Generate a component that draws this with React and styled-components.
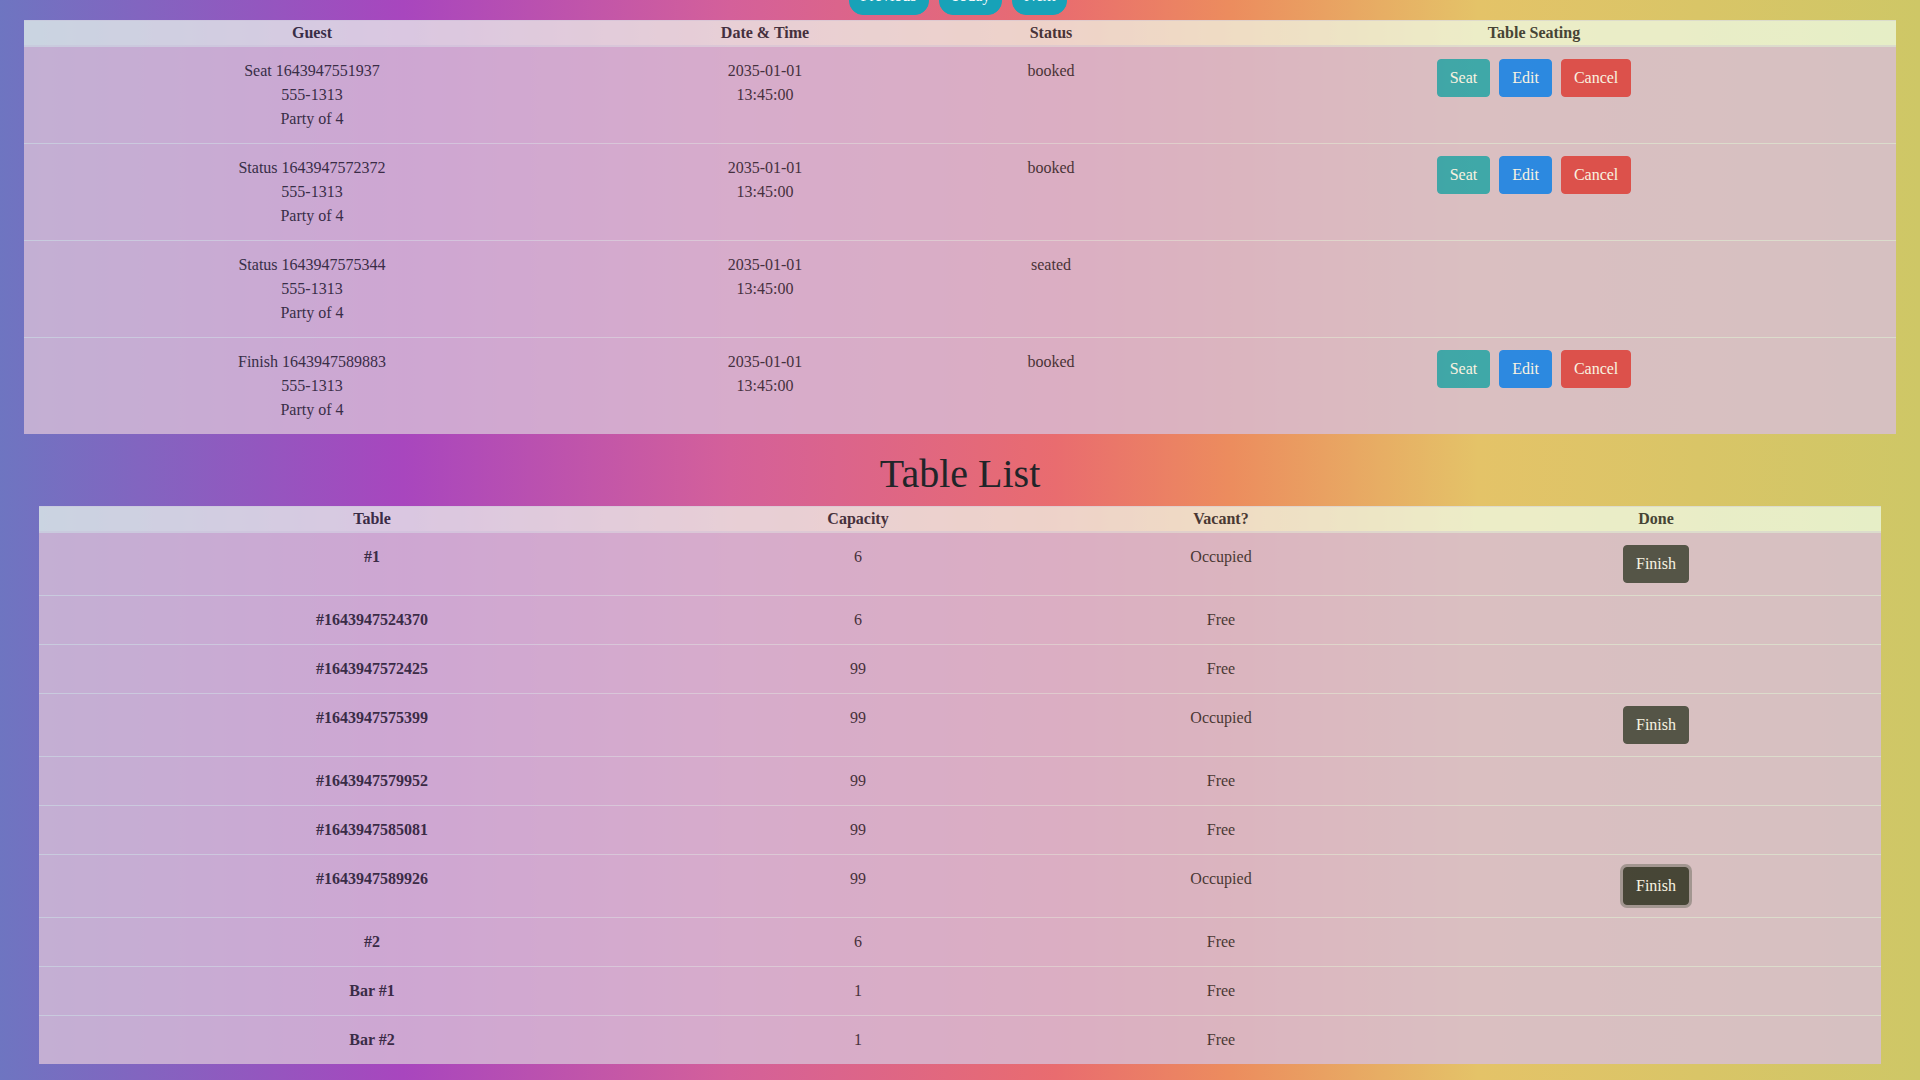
import styled, { createGlobalStyle } from "styled-components";

const reservations = [
  { id: 1, name: "Seat 1643947551937", mobile: "555-1313", people: 4, date: "2035-01-01", time: "13:45:00", status: "booked" },
  { id: 2, name: "Status 1643947572372", mobile: "555-1313", people: 4, date: "2035-01-01", time: "13:45:00", status: "booked" },
  { id: 3, name: "Status 1643947575344", mobile: "555-1313", people: 4, date: "2035-01-01", time: "13:45:00", status: "seated" },
  { id: 4, name: "Finish 1643947589883", mobile: "555-1313", people: 4, date: "2035-01-01", time: "13:45:00", status: "booked" },
];

const tables = [
  { id: 1, name: "#1", capacity: 6, occupied: true },
  { id: 2, name: "#1643947524370", capacity: 6, occupied: false },
  { id: 3, name: "#1643947572425", capacity: 99, occupied: false },
  { id: 4, name: "#1643947575399", capacity: 99, occupied: true },
  { id: 5, name: "#1643947579952", capacity: 99, occupied: false },
  { id: 6, name: "#1643947585081", capacity: 99, occupied: false },
  { id: 7, name: "#1643947589926", capacity: 99, occupied: true, focused: true },
  { id: 8, name: "#2", capacity: 6, occupied: false },
  { id: 9, name: "Bar #1", capacity: 1, occupied: false },
  { id: 10, name: "Bar #2", capacity: 1, occupied: false },
];

export default function App() {
  return (
    <>
      <GlobalStyle />
      <Main>
        <DateNav>
          <NavButton type="button">Previous</NavButton>
          <NavButton type="button">Today</NavButton>
          <NavButton type="button">Next</NavButton>
        </DateNav>

        <Table>
          <thead>
            <tr>
              <Th $w="576px">Guest</Th>
              <Th $w="330px">Date &amp; Time</Th>
              <Th $w="242px">Status</Th>
              <Th $w="724px">Table Seating</Th>
            </tr>
          </thead>
          <tbody>
            {reservations.map((r) => (
              <tr key={r.id}>
                <Td>
                  {r.name}
                  <br />
                  {r.mobile}
                  <br />
                  Party of {r.people}
                </Td>
                <Td>
                  {r.date}
                  <br />
                  {r.time}
                </Td>
                <Td>{r.status}</Td>
                <Td>
                  {r.status === "booked" && (
                    <Actions>
                      <Button $bg="#17a2b8">Seat</Button>
                      <Button $bg="#007bff">Edit</Button>
                      <Button $bg="#dc3545">Cancel</Button>
                    </Actions>
                  )}
                </Td>
              </tr>
            ))}
          </tbody>
        </Table>

        <Title>Table List</Title>

        <TablesWrap>
          <Table>
            <thead>
              <tr>
                <Th $w="666px">Table</Th>
                <Th $w="306px">Capacity</Th>
                <Th $w="420px">Vacant?</Th>
                <Th $w="450px">Done</Th>
              </tr>
            </thead>
            <tbody>
              {tables.map((t) => (
                <tr key={t.id}>
                  <Td $bold>{t.name}</Td>
                  <Td>{t.capacity}</Td>
                  <Td>{t.occupied ? "Occupied" : "Free"}</Td>
                  <Td>
                    {t.occupied && (
                      <Button $bg={t.focused ? "#23272b" : "#343a40"} $ring={t.focused}>
                        Finish
                      </Button>
                    )}
                  </Td>
                </tr>
              ))}
            </tbody>
          </Table>
        </TablesWrap>
      </Main>
    </>
  );
}

const GlobalStyle = createGlobalStyle`
  html, body {
    margin: 0;
    padding: 0;
  }

  body {
    min-height: 100vh;
    font-family: "Liberation Serif", "Times New Roman", serif;
    font-size: 16px;
    line-height: 1.5;
    color: #212529;
    background: linear-gradient(
      90deg,
      #6e75c1 0%,
      #a846be 21%,
      #d4609a 38%,
      #e96c6f 55%,
      #ec8c5e 64%,
      #e4c368 77%,
      #cec766 100%
    );
  }
`;

const Main = styled.main`
  padding: 0 24px 16px;
  overflow: hidden;
`;

const DateNav = styled.div`
  display: flex;
  justify-content: center;
  gap: 10px;
  margin-top: -23px;
  margin-bottom: 5px;
  padding-right: 4px;
`;

const NavButton = styled.button`
  font-family: inherit;
  font-size: 16px;
  line-height: 1.5;
  padding: 6px 11px;
  border: 1px solid #17a2b8;
  border-radius: 14px;
  background: #17a2b8;
  color: #fff;
`;

const Table = styled.table`
  width: 100%;
  table-layout: fixed;
  border-collapse: collapse;
  opacity: 0.8;
  margin-bottom: 16px;
`;

const Th = styled.th`
  width: ${(p) => p.$w};
  padding: 0;
  font-weight: 700;
  text-align: center;
  background: rgba(240, 255, 240, 0.875);
  border-top: 1px solid #dee2e6;
  border-bottom: 2px solid #dee2e6;
`;

const Td = styled.td`
  padding: 12px;
  text-align: center;
  vertical-align: top;
  font-weight: ${(p) => (p.$bold ? 700 : 400)};
  background: thistle;
  border-top: 1px solid #dee2e6;
`;

const Actions = styled.div`
  display: flex;
  justify-content: center;
  gap: 9px;
`;

const Button = styled.button`
  font-family: inherit;
  font-size: 16px;
  line-height: 1.5;
  padding: 6px 12px;
  border: 1px solid ${(p) => p.$bg};
  border-radius: 4px;
  background: ${(p) => p.$bg};
  color: #fff;
  box-shadow: ${(p) => (p.$ring ? "0 0 0 3px rgba(82, 88, 93, 0.5)" : "none")};
`;

const Title = styled.h1`
  margin: 0 0 8px;
  font-size: 40px;
  font-weight: 400;
  line-height: 1.2;
  text-align: center;
`;

const TablesWrap = styled.div`
  padding: 0 15px;
`;
